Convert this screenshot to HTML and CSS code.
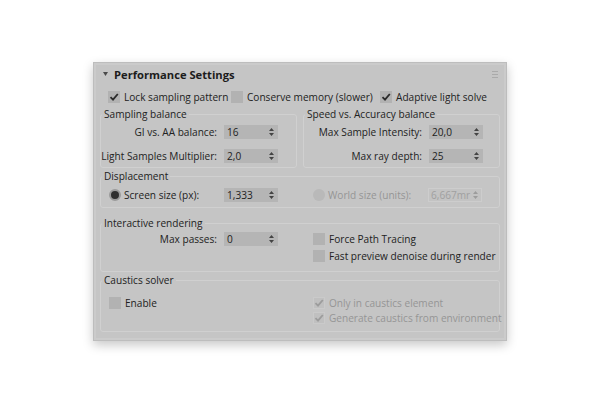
FILE: index.html
```html
<!DOCTYPE html>
<html>
<head>
<meta charset="utf-8">
<link rel="stylesheet" href="styles.css">
</head>
<body>
<div class="panel">
  <div class="header">
    <svg class="tri" width="5" height="4" viewBox="0 0 5 4"><path d="M0 0H5L2.5 4Z" fill="#4a4a4a"/></svg>
    <span class="title">Performance Settings</span>
    <svg class="grip" width="6" height="7" viewBox="0 0 6 7"><path d="M0 0.5H6M0 3.5H6M0 6.5H6" stroke="#aaaaaa" stroke-width="1"/></svg>
  </div>

  <div class="toprow">
    <div class="cb"><span class="box"><svg width="12" height="12" viewBox="0 0 12 12"><path class="ck" d="M2.5 6.2L5 8.7L9.8 3"/></svg></span><span>Lock sampling pattern</span></div>
    <div class="cb"><span class="box"></span><span>Conserve memory (slower)</span></div>
    <div class="cb"><span class="box"><svg width="12" height="12" viewBox="0 0 12 12"><path class="ck" d="M2.5 6.2L5 8.7L9.8 3"/></svg></span><span>Adaptive light solve</span></div>
  </div>

  <div class="pair">
    <fieldset class="grp g1">
      <legend>Sampling balance</legend>
      <div class="form left">
        <span class="lbl">GI vs. AA balance:</span>
        <span class="spin">16<svg class="arr" width="5" height="8" viewBox="0 0 5 8"><path d="M2.5 0L5 3H0Z M0 5H5L2.5 8Z" fill="#444"/></svg></span>
        <span class="lbl">Light Samples Multiplier:</span>
        <span class="spin">2,0<svg class="arr" width="5" height="8" viewBox="0 0 5 8"><path d="M2.5 0L5 3H0Z M0 5H5L2.5 8Z" fill="#444"/></svg></span>
      </div>
    </fieldset>
    <fieldset class="grp g1">
      <legend>Speed vs. Accuracy balance</legend>
      <div class="form right">
        <span class="lbl">Max Sample Intensity:</span>
        <span class="spin">20,0<svg class="arr" width="5" height="8" viewBox="0 0 5 8"><path d="M2.5 0L5 3H0Z M0 5H5L2.5 8Z" fill="#444"/></svg></span>
        <span class="lbl">Max ray depth:</span>
        <span class="spin">25<svg class="arr" width="5" height="8" viewBox="0 0 5 8"><path d="M2.5 0L5 3H0Z M0 5H5L2.5 8Z" fill="#444"/></svg></span>
      </div>
    </fieldset>
  </div>

  <fieldset class="grp g2">
    <legend>Displacement</legend>
    <div class="halves">
      <div class="half hl">
        <div class="radrow">
          <span class="radio on"></span>
          <span>Screen size (px):</span>
          <span class="spin">1,333<svg class="arr" width="5" height="8" viewBox="0 0 5 8"><path d="M2.5 0L5 3H0Z M0 5H5L2.5 8Z" fill="#444"/></svg></span>
        </div>
      </div>
      <div class="half hr">
        <div class="radrow dis">
          <span class="radio"></span>
          <span>World size (units):</span>
          <span class="spin off">6,667mr<svg class="arr" width="5" height="8" viewBox="0 0 5 8"><path d="M2.5 0L5 3H0Z M0 5H5L2.5 8Z" fill="#9c9c9c"/></svg></span>
        </div>
      </div>
    </div>
  </fieldset>

  <fieldset class="grp g3">
    <legend>Interactive rendering</legend>
    <div class="halves">
      <div class="half">
        <div class="form left single">
          <span class="lbl">Max passes:</span>
          <span class="spin">0<svg class="arr" width="5" height="8" viewBox="0 0 5 8"><path d="M2.5 0L5 3H0Z M0 5H5L2.5 8Z" fill="#444"/></svg></span>
        </div>
      </div>
      <div class="half hr list">
        <div class="cb"><span class="box"></span><span>Force Path Tracing</span></div>
        <div class="cb"><span class="box"></span><span>Fast preview denoise during render</span></div>
      </div>
    </div>
  </fieldset>

  <fieldset class="grp g4">
    <legend>Caustics solver</legend>
    <div class="halves">
      <div class="half hl list">
        <div class="cb"><span class="box"></span><span>Enable</span></div>
      </div>
      <div class="half hr list dis">
        <div class="cb"><span class="box"><svg width="12" height="12" viewBox="0 0 12 12"><path class="ck" d="M2.5 6.2L5 8.7L9.8 3"/></svg></span><span>Only in caustics element</span></div>
        <div class="cb"><span class="box"><svg width="12" height="12" viewBox="0 0 12 12"><path class="ck" d="M2.5 6.2L5 8.7L9.8 3"/></svg></span><span>Generate caustics from environment</span></div>
      </div>
    </div>
  </fieldset>
</div>
</body>
</html>
```
FILE: styles.css
```css
html, body {
  margin: 0;
  padding: 0;
  background: #ffffff;
}
body {
  width: 600px;
  height: 406px;
  overflow: hidden;
  font-family: "Open Sans", "Liberation Sans", sans-serif;
  font-size: 10.1px;
  color: #222222;
}
.panel {
  margin: 62px 0 0 93px;
  width: 414px;
  height: 279px;
  box-sizing: border-box;
  background: #c5c5c5;
  border: 1px solid #bdbdbd;
  box-shadow: 0 4px 10px rgba(0,0,0,0.22), inset 0 0 0 2px #cbcbcb;
  padding: 0 6px;
}
.header {
  height: 23px;
  display: flex;
  align-items: center;
  position: relative;
}
.tri {
  margin-left: 3px;
  margin-right: 6px;
  margin-top: -1px;
}
.title {
  font-weight: 700;
  font-size: 11.2px;
  color: #1c1c1c;
}
.grip {
  position: absolute;
  right: 2px;
  top: 8px;
}
.toprow {
  margin-top: 3px;
  height: 16px;
  display: grid;
  grid-template-columns: 123px 149px auto;
  padding-left: 8px;
}
.cb {
  display: flex;
  align-items: center;
  height: 16px;
  gap: 4px;
  white-space: nowrap;
}
.box {
  width: 12px;
  height: 12px;
  background: #b2b2b2;
  flex: none;
  display: block;
}
.box svg { display: block; }
.ck {
  fill: none;
  stroke: #2a2a2a;
  stroke-width: 1.8;
}
.dis .ck { stroke: #9c9c9c; }
.dis { color: #959595; }
.dis .box { background: #c0c0c0; box-shadow: inset 0 0 0 1px #cacaca; }

.pair {
  display: grid;
  grid-template-columns: 197px 197px;
  column-gap: 6px;
  margin-top: 2px;
}
.grp {
  margin: 0;
  padding: 0;
  border: 1px solid #d0d0d0;
  border-radius: 3px;
  min-width: 0;
  box-sizing: border-box;
}
.grp legend {
  padding: 0 2px;
  margin-left: 1px;
  line-height: 14px;
  height: 14px;
}
.g1 { height: 61px; }
.g2 { margin-top: 1px; height: 39px; }
.g3 { margin-top: 8px; height: 56px; }
.g4 { margin-top: 1px; height: 59px; }

.form {
  display: grid;
  row-gap: 10px;
  padding-top: 4px;
  align-items: center;
}
.form.left { grid-template-columns: 116px 54px; column-gap: 7px; }
.form.right { grid-template-columns: 118px 54px; column-gap: 7px; }
.form.single { padding-top: 2px; }
.lbl {
  text-align: right;
  white-space: nowrap;
  line-height: 14px;
}
.spin {
  position: relative;
  width: 54px;
  height: 14px;
  line-height: 14px;
  background: #b5b5b5;
  padding-left: 3px;
  box-sizing: border-box;
  overflow: hidden;
  white-space: nowrap;
}
.arr {
  position: absolute;
  right: 4px;
  top: 3px;
}
.spin.off {
  background: #c3c3c3;
  box-shadow: inset 0 0 0 1px #cdcdcd;
  color: #a0a0a0;
  padding-right: 12px;
}

.halves {
  display: grid;
  grid-template-columns: 202px auto;
}
.half { min-width: 0; }
.hl { padding-left: 8px; }
.hr { padding-left: 10px; }
.radrow {
  display: grid;
  grid-template-columns: 12px 97px 54px;
  column-gap: 3px;
  align-items: center;
  padding-top: 5px;
  white-space: nowrap;
}
.radio {
  width: 12px;
  height: 12px;
  border-radius: 50%;
  background: #b9b9b9;
  box-sizing: border-box;
}
.radio.on {
  background: #2e2e2e;
  border: 2px solid #9a9a9a;
}
.list { padding-top: 2px; }
.g3 .hr.list { padding-top: 1px; }
.g3 .hr .cb:last-child { margin-top: 1px; }
.g4 .list { padding-top: 8px; }
.g4 .cb { height: 15px; }
```
